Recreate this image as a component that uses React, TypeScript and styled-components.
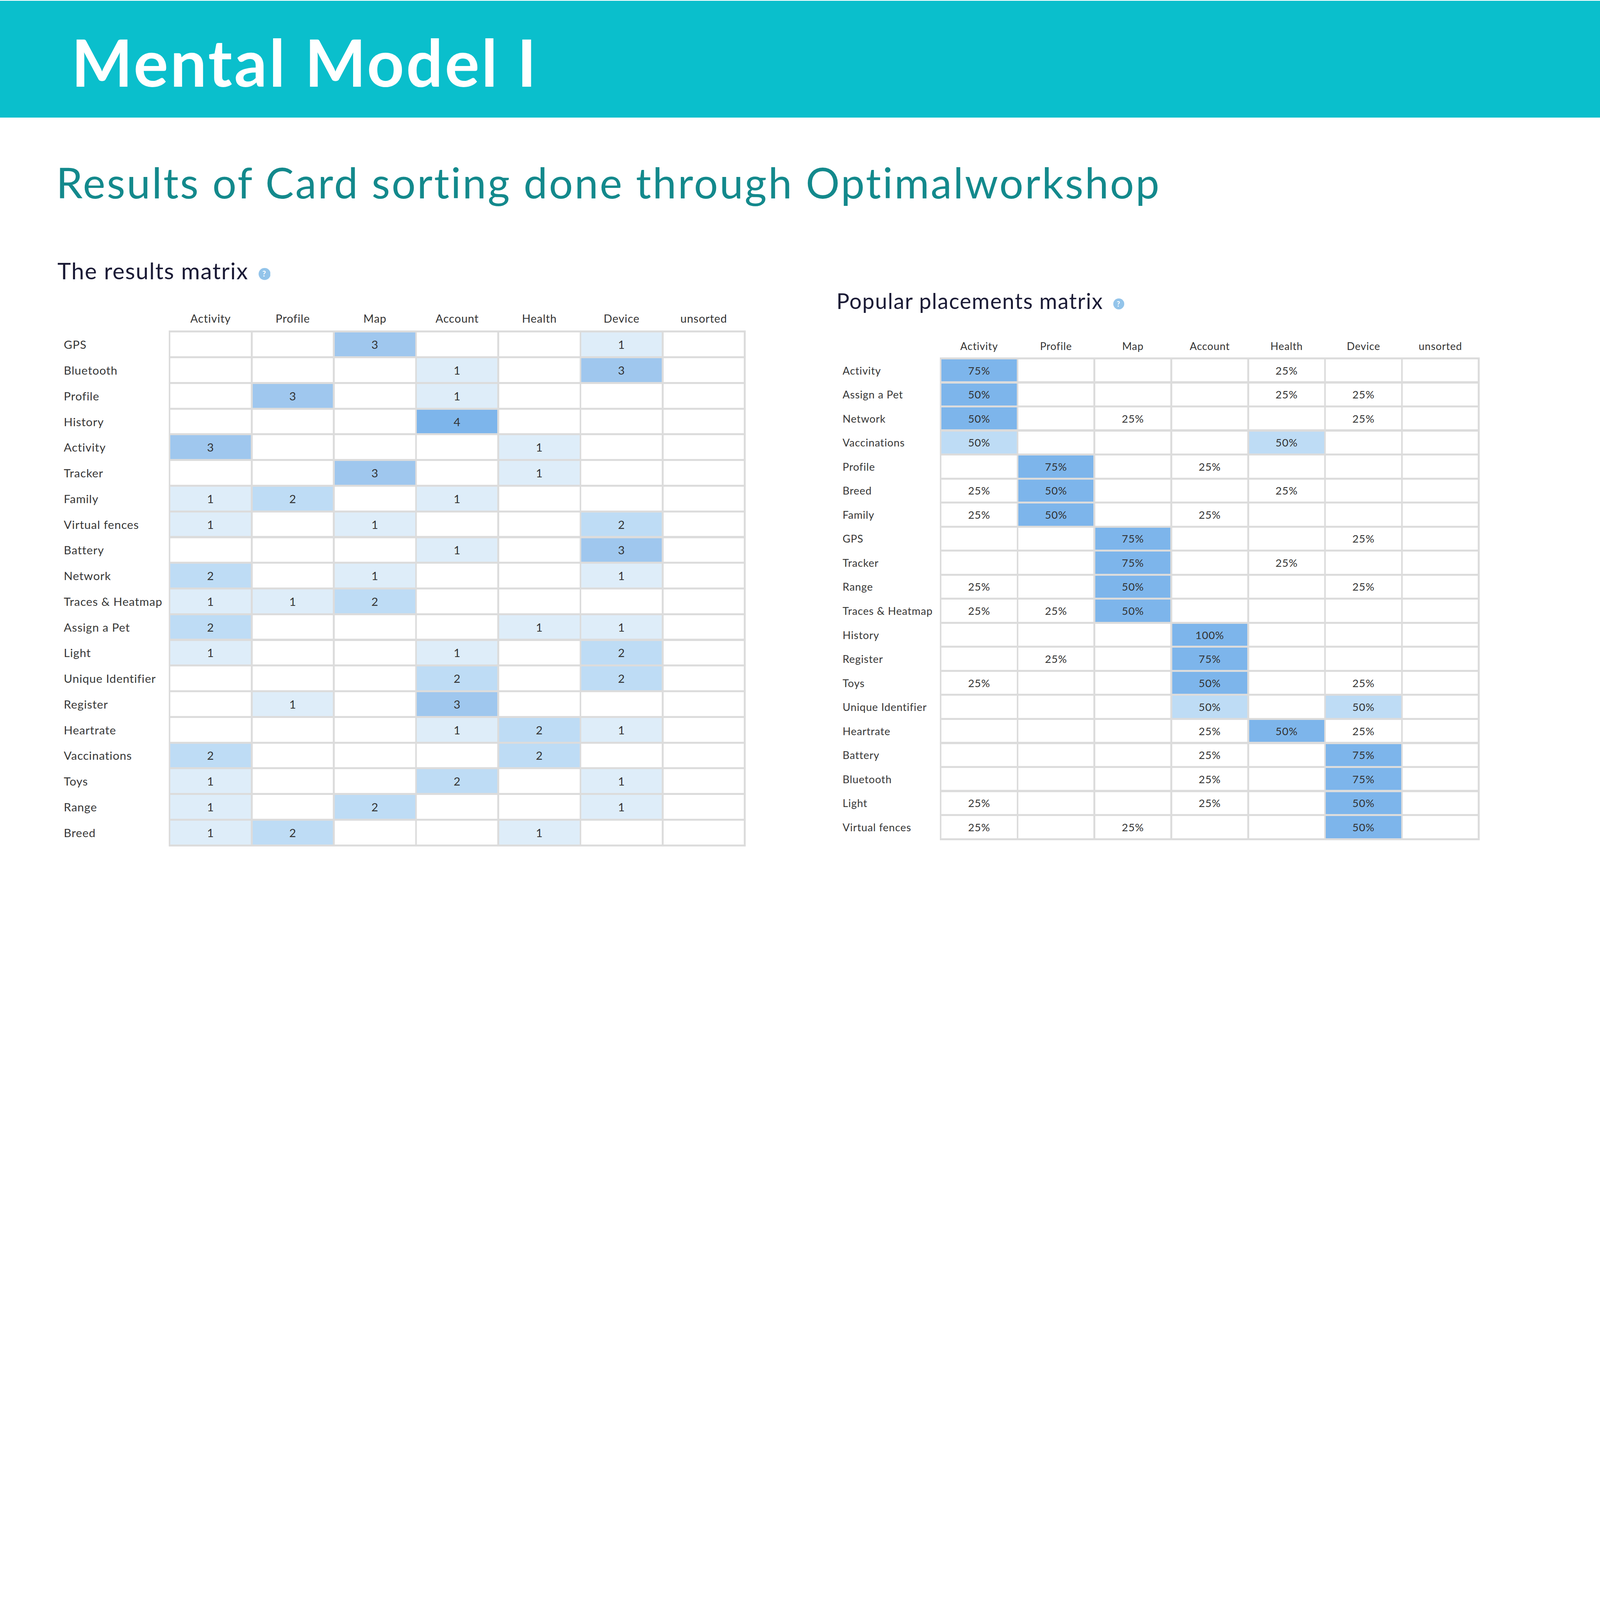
import React from "react";
import styled, { createGlobalStyle } from "styled-components";

// the slide is drawn on an 8000px-wide design grid and scaled to the viewport
const v = (px: number) => `${(px / 80).toFixed(4)}vw`;

type Tone = 0 | 1 | 2 | 3 | 4;

interface MatrixLayout {
  labelW: number;
  cellW: number;
  cellH: number;
  gapX: number;
  gapY: number;
  headH: number;
  labelSize: number;
  valueSize: number;
  headSize: number;
}

interface MatrixRow {
  label: string;
  cells: [string, Tone][];
}

const COLUMNS = ["Activity", "Profile", "Map", "Account", "Health", "Device", "unsorted"];

const TONES: Record<Tone, string> = {
  0: "#ffffff",
  1: "#deedf9",
  2: "#bedcf5",
  3: "#9fc7ee",
  4: "#7db5eb",
};

// sparse rows: column index -> [text, tone]
const row = (label: string, filled: Record<number, [string, Tone]>): MatrixRow => ({
  label,
  cells: COLUMNS.map((_, i) => filled[i] ?? ["", 0]),
});

const n = (val: number): [string, Tone] => [String(val), val as Tone];
const p = (val: number, tone: Tone = 0): [string, Tone] => [`${val}%`, tone];

const resultsRows: MatrixRow[] = [
  row("GPS", { 2: n(3), 5: n(1) }),
  row("Bluetooth", { 3: n(1), 5: n(3) }),
  row("Profile", { 1: n(3), 3: n(1) }),
  row("History", { 3: n(4) }),
  row("Activity", { 0: n(3), 4: n(1) }),
  row("Tracker", { 2: n(3), 4: n(1) }),
  row("Family", { 0: n(1), 1: n(2), 3: n(1) }),
  row("Virtual fences", { 0: n(1), 2: n(1), 5: n(2) }),
  row("Battery", { 3: n(1), 5: n(3) }),
  row("Network", { 0: n(2), 2: n(1), 5: n(1) }),
  row("Traces & Heatmap", { 0: n(1), 1: n(1), 2: n(2) }),
  row("Assign a Pet", { 0: n(2), 4: n(1), 5: n(1) }),
  row("Light", { 0: n(1), 3: n(1), 5: n(2) }),
  row("Unique Identifier", { 3: n(2), 5: n(2) }),
  row("Register", { 1: n(1), 3: n(3) }),
  row("Heartrate", { 3: n(1), 4: n(2), 5: n(1) }),
  row("Vaccinations", { 0: n(2), 4: n(2) }),
  row("Toys", { 0: n(1), 3: n(2), 5: n(1) }),
  row("Range", { 0: n(1), 2: n(2), 5: n(1) }),
  row("Breed", { 0: n(1), 1: n(2), 4: n(1) }),
];

const placementRows: MatrixRow[] = [
  row("Activity", { 0: p(75, 4), 4: p(25) }),
  row("Assign a Pet", { 0: p(50, 4), 4: p(25), 5: p(25) }),
  row("Network", { 0: p(50, 4), 2: p(25), 5: p(25) }),
  row("Vaccinations", { 0: p(50, 2), 4: p(50, 2) }),
  row("Profile", { 1: p(75, 4), 3: p(25) }),
  row("Breed", { 0: p(25), 1: p(50, 4), 4: p(25) }),
  row("Family", { 0: p(25), 1: p(50, 4), 3: p(25) }),
  row("GPS", { 2: p(75, 4), 5: p(25) }),
  row("Tracker", { 2: p(75, 4), 4: p(25) }),
  row("Range", { 0: p(25), 2: p(50, 4), 5: p(25) }),
  row("Traces & Heatmap", { 0: p(25), 1: p(25), 2: p(50, 4) }),
  row("History", { 3: p(100, 4) }),
  row("Register", { 1: p(25), 3: p(75, 4) }),
  row("Toys", { 0: p(25), 3: p(50, 4), 5: p(25) }),
  row("Unique Identifier", { 3: p(50, 2), 5: p(50, 2) }),
  row("Heartrate", { 3: p(25), 4: p(50, 4), 5: p(25) }),
  row("Battery", { 3: p(25), 5: p(75, 4) }),
  row("Bluetooth", { 3: p(25), 5: p(75, 4) }),
  row("Light", { 0: p(25), 3: p(25), 5: p(50, 4) }),
  row("Virtual fences", { 0: p(25), 2: p(25), 5: p(50, 4) }),
];

const resultsLayout: MatrixLayout = {
  labelW: 524,
  cellW: 402,
  cellH: 118.5,
  gapX: 9,
  gapY: 10,
  headH: 122,
  labelSize: 58,
  valueSize: 58,
  headSize: 56,
};

const placementLayout: MatrixLayout = {
  labelW: 486,
  cellW: 375.4,
  cellH: 110.2,
  gapX: 9,
  gapY: 10,
  headH: 114,
  labelSize: 53,
  valueSize: 54,
  headSize: 52,
};

const GlobalStyle = createGlobalStyle`
  html, body {
    margin: 0;
    padding: 0;
    background: #ffffff;
  }
  body {
    font-family: Lato, "Liberation Sans", sans-serif;
  }
`;

const Page = styled.div`
  width: 100%;
  height: ${v(4500)};
  overflow: hidden;
  background: #ffffff;
  display: flex;
  flex-direction: column;
`;

const Banner = styled.header`
  margin-top: ${v(4)};
  height: ${v(583)};
  box-sizing: border-box;
  padding: ${v(143)} 0 0 ${v(357)};
  background: #0abfcc;
`;

const Title = styled.h1`
  margin: 0;
  font-size: ${v(324)};
  line-height: 1;
  font-weight: 700;
  letter-spacing: 0.03em;
  color: #ffffff;
`;

const Subtitle = styled.h2`
  margin: ${v(217)} 0 0 ${v(281)};
  font-size: ${v(212)};
  line-height: 1;
  font-weight: 400;
  letter-spacing: 0.036em;
  color: #13898c;
`;

const Panels = styled.div`
  display: flex;
  align-items: flex-start;
  margin-top: ${v(278)};
  padding-left: ${v(287)};
`;

const Panel = styled.section<{ $width?: number; $top: number; $indent: number }>`
  ${({ $width }) => ($width ? `width: ${v($width)};` : "")}
  margin-top: ${({ $top }) => v($top)};
  display: flex;
  flex-direction: column;
  .matrix {
    padding-left: ${({ $indent }) => v($indent)};
  }
`;

const PanelHeading = styled.h3<{ $size: number; $after: number }>`
  margin: 0 0 ${({ $after }) => v($after)} 0;
  font-size: ${({ $size }) => v($size)};
  line-height: 1;
  font-weight: 400;
  letter-spacing: 0.03em;
  color: #1b1b36;
  white-space: nowrap;
`;

const HelpBadge = styled.svg<{ $size: number; $drop: number }>`
  width: ${({ $size }) => v($size)};
  height: ${({ $size }) => v($size)};
  margin-left: ${v(50)};
  vertical-align: ${({ $drop }) => v(-$drop)};
`;

const HeadRow = styled.div<{ $l: MatrixLayout }>`
  display: flex;
  align-items: center;
  height: ${({ $l }) => v($l.headH)};
  padding-left: ${({ $l }) => v($l.labelW + $l.gapX / 2)};
`;

const ColHead = styled.div<{ $l: MatrixLayout }>`
  width: ${({ $l }) => v($l.cellW + $l.gapX)};
  flex-shrink: 0;
  text-align: center;
  font-size: ${({ $l }) => v($l.headSize)};
  letter-spacing: 0.032em;
  color: #333333;
`;

const Body = styled.div`
  display: flex;
`;

const RowLabels = styled.div<{ $l: MatrixLayout }>`
  width: ${({ $l }) => v($l.labelW)};
  flex-shrink: 0;
  display: flex;
  flex-direction: column;
  gap: ${({ $l }) => v($l.gapY)};
  padding-top: ${({ $l }) => v($l.gapY)};
`;

const RowLabel = styled.div<{ $l: MatrixLayout }>`
  height: ${({ $l }) => v($l.cellH)};
  display: flex;
  align-items: center;
  font-size: ${({ $l }) => v($l.labelSize)};
  letter-spacing: 0.032em;
  color: #363636;
  white-space: nowrap;
`;

const Grid = styled.div<{ $l: MatrixLayout }>`
  display: grid;
  grid-template-columns: repeat(7, ${({ $l }) => v($l.cellW)});
  grid-auto-rows: ${({ $l }) => v($l.cellH)};
  gap: ${({ $l }) => `${v($l.gapY)} ${v($l.gapX)}`};
  padding: ${({ $l }) => `${v($l.gapY)} ${v($l.gapX)}`};
  background: #dcdcdc;
`;

const Cell = styled.div<{ $tone: Tone; $size: number }>`
  display: flex;
  align-items: center;
  justify-content: center;
  background: ${({ $tone }) => TONES[$tone]};
  font-size: ${({ $size }) => v($size)};
  letter-spacing: 0.032em;
  color: #333333;
`;

function HelpIcon({ size, drop }: { size: number; drop: number }) {
  return (
    <HelpBadge $size={size} $drop={drop} viewBox="0 0 20 20">
      <circle cx="10" cy="10" r="10" fill="#93c4ea" />
      <text
        x="10"
        y="14.6"
        textAnchor="middle"
        fontSize="13"
        fontWeight="700"
        fontFamily="Lato, sans-serif"
        fill="#ffffff"
      >
        ?
      </text>
    </HelpBadge>
  );
}

function Matrix({ rows, layout }: { rows: MatrixRow[]; layout: MatrixLayout }) {
  return (
    <div className="matrix">
      <HeadRow $l={layout}>
        {COLUMNS.map((c) => (
          <ColHead key={c} $l={layout}>
            {c}
          </ColHead>
        ))}
      </HeadRow>
      <Body>
        <RowLabels $l={layout}>
          {rows.map((r) => (
            <RowLabel key={r.label} $l={layout}>
              {r.label}
            </RowLabel>
          ))}
        </RowLabels>
        <Grid $l={layout}>
          {rows.map((r) =>
            r.cells.map(([text, tone], i) => (
              <Cell key={`${r.label}-${i}`} $tone={tone} $size={layout.valueSize}>
                {text}
              </Cell>
            ))
          )}
        </Grid>
      </Body>
    </div>
  );
}

export default function App() {
  return (
    <>
      <GlobalStyle />
      <Page>
        <Banner>
          <Title>Mental Model I</Title>
        </Banner>
        <Subtitle>Results of Card sorting done through Optimalworkshop</Subtitle>
        <Panels>
          <Panel $width={3895} $top={0} $indent={32}>
            <PanelHeading $size={114} $after={123}>
              The results matrix
              <HelpIcon size={60} drop={5} />
            </PanelHeading>
            <Matrix rows={resultsRows} layout={resultsLayout} />
          </Panel>
          <Panel $top={156} $indent={31}>
            <PanelHeading $size={108} $after={115}>
              Popular placements matrix
              <HelpIcon size={55} drop={2} />
            </PanelHeading>
            <Matrix rows={placementRows} layout={placementLayout} />
          </Panel>
        </Panels>
      </Page>
    </>
  );
}
